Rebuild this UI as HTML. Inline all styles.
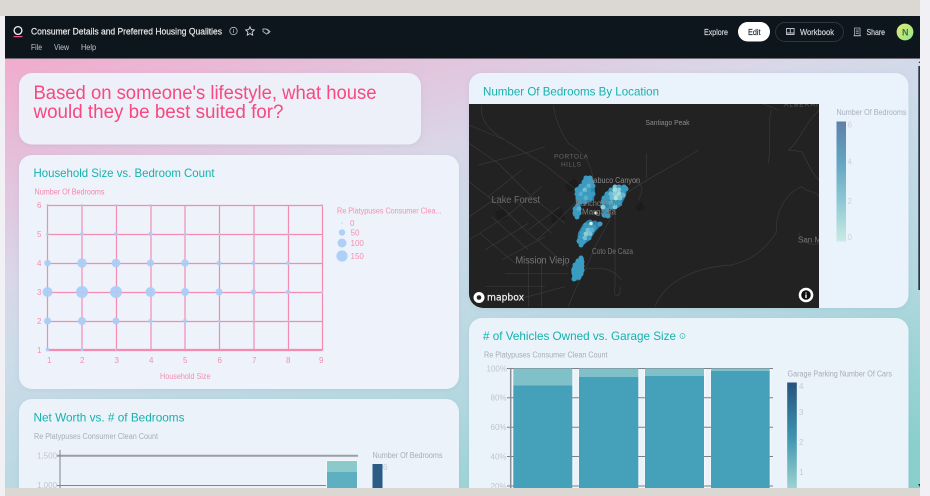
<!DOCTYPE html>
<html><head><meta charset="utf-8"><title>Consumer Details and Preferred Housing Qualities</title>
<style>
html,body{margin:0;padding:0;width:930px;height:496px;overflow:hidden;background:#f1f1f5}
svg{position:absolute;left:0;top:0;display:block}
text{font-family:"Liberation Sans",sans-serif}
.dots circle{r:2.5px}
.nav{stroke-width:.18px}
</style></head><body>
<svg width="930" height="496" viewBox="0 0 930 496" xmlns="http://www.w3.org/2000/svg">
<defs>
<linearGradient id="bg" gradientUnits="userSpaceOnUse" x1="63" y1="-0" x2="246" y2="638">
<stop offset="0" stop-color="#f7a3c7"/><stop offset=".19" stop-color="#e6bdd9"/><stop offset=".38" stop-color="#d9d7e8"/><stop offset=".49" stop-color="#cddce9"/><stop offset=".75" stop-color="#b3d8e0"/><stop offset="1" stop-color="#88d0cc"/></linearGradient>
<linearGradient id="l1" x1="0" y1="0" x2="0" y2="1"><stop offset="0" stop-color="#5e80a8"/><stop offset=".35" stop-color="#64a6c2"/><stop offset=".65" stop-color="#8cc6d4"/><stop offset="1" stop-color="#c8ebe3"/></linearGradient>
<linearGradient id="l2" x1="0" y1="0" x2="0" y2="1"><stop offset="0" stop-color="#27527d"/><stop offset=".5" stop-color="#3d93b1"/><stop offset="1" stop-color="#9fd6d0"/></linearGradient>
<linearGradient id="av" x1="0" y1="0" x2="1" y2="1"><stop offset="0" stop-color="#e4ea70"/><stop offset="1" stop-color="#8fe88f"/></linearGradient>
<clipPath id="mapc"><path d="M469 104H819V308H483A14 14 0 0 1 469 294Z"/></clipPath>
<filter id="soft" x="-5%" y="-5%" width="110%" height="110%"><feGaussianBlur stdDeviation=".35"/></filter>
<filter id="sh" x="-5%" y="-5%" width="110%" height="110%"><feDropShadow dx="0" dy="1" stdDeviation="3" flood-color="#8090b0" flood-opacity=".18"/></filter>
</defs>

<g filter="url(#soft)">
<rect x="0" y="0" width="930" height="496" fill="#f1f1f5"/>
<rect x="5" y="58" width="915" height="432" fill="url(#bg)"/>
<rect x="0" y="0" width="920" height="16" fill="#dbd8d3"/>
<rect x="5" y="16" width="915" height="42" fill="#11151a"/>
<rect x="5" y="58" width="915" height="1" fill="#6f6a75"/>

<!-- nav -->
<circle cx="18" cy="30.5" r="3.9" fill="none" stroke="#f4f4f4" stroke-width="1.3"/>
<rect x="13.5" y="36" width="9" height="1.2" fill="#ee4f8b"/>
<text class="nav" x="31" y="34.5" font-size="9.6" fill="#eceef0" stroke="#eceef0" textLength="191" lengthAdjust="spacingAndGlyphs">Consumer Details and Preferred Housing Qualities</text>
<text x="31" y="50" font-size="8" fill="#c2c7ce" textLength="11" lengthAdjust="spacingAndGlyphs">File</text>
<text x="54" y="50" font-size="8" fill="#c2c7ce" textLength="15" lengthAdjust="spacingAndGlyphs">View</text>
<text x="81" y="50" font-size="8" fill="#c2c7ce" textLength="15" lengthAdjust="spacingAndGlyphs">Help</text>
<circle cx="233.5" cy="31" r="3.7" fill="none" stroke="#b9bdc3" stroke-width=".8"/>
<path d="M233.5 30.3v2.4M233.5 29v.7" stroke="#b9bdc3" stroke-width=".8"/>
<path d="M250 26.8l1.3 2.8 3 .4-2.2 2.1.6 3-2.7-1.5-2.7 1.5.6-3-2.2-2.1 3-.4z" fill="none" stroke="#d5d8dc" stroke-width=".9"/>
<path d="M263 29h3.2l3 2.5-2.6 2.6-3.6-2.6zM267 29l3 2.5-2 2.2" fill="none" stroke="#aeb2b8" stroke-width=".9"/>

<text class="nav" x="704" y="35" font-size="8.2" fill="#d2d6dc" stroke="#d2d6dc" textLength="24" lengthAdjust="spacingAndGlyphs">Explore</text>
<rect x="738" y="22" width="32" height="19.5" rx="9.7" fill="#fff"/>
<text class="nav" x="748" y="35" font-size="8.2" fill="#1c2530" stroke="#1c2530" textLength="12.5" lengthAdjust="spacingAndGlyphs">Edit</text>
<rect x="775.5" y="22.5" width="68" height="19" rx="9.5" fill="none" stroke="#30353c" stroke-width=".9"/>
<path d="M786.5 28.5h3.2l.6.6.6-.6h3.200v6h-7.600zM786 33h8.600M790.300 29v4" fill="none" stroke="#bfc3c9" stroke-width=".9"/>
<text class="nav" x="800" y="35" font-size="8.4" fill="#d2d6dc" stroke="#d2d6dc" textLength="34" lengthAdjust="spacingAndGlyphs">Workbook</text>
<path d="M854.500 28h5.500v7.500h-5.500zM853.500 35.800h7.500M855.800 30h3M855.800 31.800h3M855.800 33.600h3" fill="none" stroke="#aeb2b8" stroke-width=".8"/>
<text class="nav" x="866.500" y="35" font-size="8.4" fill="#d2d6dc" stroke="#d2d6dc" textLength="18.500" lengthAdjust="spacingAndGlyphs">Share</text>
<circle cx="905" cy="32" r="8.4" fill="url(#av)"/>
<text x="902" y="35.3" font-size="9" font-weight="bold" fill="#4c6a3d">N</text>

<!-- cards -->
<rect x="19" y="73" width="402" height="71.500" rx="13" fill="#edf0f9" filter="url(#sh)"/>
<rect x="19" y="155" width="440" height="234" rx="13" fill="#eef2fa" filter="url(#sh)"/>
<rect x="19" y="399" width="440" height="110" rx="13" fill="#ebf2fa" filter="url(#sh)"/>
<rect x="469" y="73" width="439.500" height="235" rx="13" fill="#eaf2fb" filter="url(#sh)"/>
<rect x="469" y="318" width="439.500" height="190" rx="13" fill="#eaf2fa" filter="url(#sh)"/>

<text x="33.500" y="99" font-size="19" fill="#f7487f" textLength="343" lengthAdjust="spacingAndGlyphs">Based on someone's lifestyle, what house</text>
<text x="33.500" y="118" font-size="19" fill="#f7487f" textLength="250" lengthAdjust="spacingAndGlyphs">would they be best suited for?</text>

<!-- scatter -->
<text x="33.500" y="176.800" font-size="12" fill="#13b2ad" textLength="181" lengthAdjust="spacingAndGlyphs">Household Size vs. Bedroom Count</text>
<text x="34.500" y="194.500" font-size="8" fill="#f486ad" textLength="70" lengthAdjust="spacingAndGlyphs">Number Of Bedrooms</text>
<g stroke="#f68bb1" stroke-width="1.200" fill="none">
<path d="M47.500 205V350M82 205V350M116.500 205V350M151 205V350M185 205V350M219.500 205V350M254 205V350M288.500 205V350M322.500 205V350"/>
<path d="M47.500 205.500H322.500M47.500 234.500H322.500M47.500 263.500H322.500M47.500 292.500H322.500M47.500 321.500H322.500"/>
<path d="M47.500 350H322.500" stroke-width="2.200"/>
</g>
<g fill="#abcdf6" fill-opacity=".95">
<circle cx="47.500" cy="292" r="5"/><circle cx="82" cy="292" r="6"/><circle cx="116" cy="292" r="6"/><circle cx="150.500" cy="292" r="5"/><circle cx="185" cy="292" r="4"/><circle cx="219" cy="292" r="3.600"/><circle cx="253.500" cy="292" r="2.900"/><circle cx="288" cy="292" r="2.200"/><circle cx="322" cy="292" r="1.200"/>
<circle cx="47.500" cy="263" r="3.300"/><circle cx="82" cy="263" r="4.700"/><circle cx="116" cy="263" r="4.400"/><circle cx="150.500" cy="263" r="3.600"/><circle cx="185" cy="263" r="3.800"/><circle cx="219" cy="263" r="2.400"/><circle cx="253.500" cy="263" r="2"/><circle cx="288" cy="263" r="1.900"/>
<circle cx="47.500" cy="321" r="3.600"/><circle cx="82" cy="321" r="4"/><circle cx="116" cy="321" r="3.600"/><circle cx="150.500" cy="321" r="2.200"/><circle cx="185" cy="321" r="2.200"/><circle cx="219" cy="321" r="1.200"/><circle cx="253.500" cy="321" r="1"/><circle cx="288" cy="321" r=".9"/>
<circle cx="47.500" cy="234" r="1.500"/><circle cx="82" cy="234" r="1.900"/><circle cx="116" cy="234" r="1.900"/><circle cx="150.500" cy="234" r="2.200"/><circle cx="185" cy="234" r="1.500"/><circle cx="219" cy="234" r="1.100"/><circle cx="253.500" cy="234" r=".9"/><circle cx="288" cy="234" r="1"/>
<circle cx="47.500" cy="205" r="1.100"/><circle cx="82" cy="205" r="1"/><circle cx="116" cy="205" r="1"/><circle cx="150.500" cy="205" r="1"/><circle cx="322" cy="205" r="1"/>
<circle cx="47.500" cy="349.500" r="1.900"/><circle cx="82" cy="349.500" r="1.500"/><circle cx="116" cy="349.500" r="1.100"/>
<circle cx="342" cy="223" r=".7"/><circle cx="342" cy="232.500" r="3.200"/><circle cx="342" cy="243" r="4.500"/><circle cx="342" cy="256" r="5.600"/>
</g>
<g font-size="8" fill="#f48fb3">
<text x="37" y="208">6</text><text x="37" y="237">5</text><text x="37" y="266">4</text><text x="37" y="295">3</text><text x="37" y="324">2</text><text x="37" y="353">1</text>
<text x="47" y="363">1</text><text x="80" y="363">2</text><text x="114.500" y="363">3</text><text x="149" y="363">4</text><text x="183" y="363">5</text><text x="217.500" y="363">6</text><text x="252" y="363">7</text><text x="286" y="363">8</text><text x="319" y="363">9</text>
<text x="160" y="379" textLength="50.500" lengthAdjust="spacingAndGlyphs">Household Size</text>
<text x="337" y="213.500" textLength="104.500" lengthAdjust="spacingAndGlyphs">Re Platypuses Consumer Clea...</text>
<text x="350" y="226">0</text><text x="350.500" y="235.500">50</text><text x="350.500" y="246">100</text><text x="350.500" y="259">150</text>
</g>

<!-- net worth -->
<text x="33.500" y="421.500" font-size="12" fill="#13b2ad" textLength="151" lengthAdjust="spacingAndGlyphs">Net Worth vs. # of Bedrooms</text>
<text x="34" y="439" font-size="8" fill="#a7adb8" textLength="124" lengthAdjust="spacingAndGlyphs">Re Platypuses Consumer Clean Count</text>
<text x="37" y="458.500" font-size="8" fill="#c0c4cc">1,500</text>
<text x="37" y="488" font-size="8" fill="#c0c4cc">1,000</text>
<path d="M57 455.800H358" stroke="#9a9ea5" stroke-width="2"/>
<path d="M57 485.500H358" stroke="#7f848c" stroke-width="1"/>
<path d="M60 450V490" stroke="#7f848c" stroke-width="1"/>
<rect x="326" y="460" width="32" height="30" fill="#f4f8fc"/>
<rect x="327" y="461" width="30" height="11" fill="#8cc9ca"/>
<rect x="327" y="472" width="30" height="18" fill="#5fafc2"/>
<text x="372.500" y="458" font-size="8" fill="#a7adb8" textLength="70" lengthAdjust="spacingAndGlyphs">Number Of Bedrooms</text>
<rect x="372.500" y="464" width="10" height="26" fill="#2a5c86"/>
<text x="383" y="470" font-size="8" fill="#c5cad4">6</text>

<!-- map card -->
<text x="483" y="95.500" font-size="12" fill="#13b2ad" textLength="176" lengthAdjust="spacingAndGlyphs">Number Of Bedrooms By Location</text>
<g clip-path="url(#mapc)">
<rect x="469" y="104" width="350" height="204" fill="#222"/>
<g transform="translate(465 100) scale(.33333)">
<path d="M300 255l30-20 20 30-40 10zM90 335l30-10 10 30-30 10zM260 340l30-15 10 30-40 15zM510 320l20-15 10 20-20 10z" fill="#1b1b1b"/>
<g fill="none" stroke="#3a3a3a" stroke-width="2">
<path d="M12 75L120 120 240 195 335 270 330 310 260 380 215 420"/>
<path d="M12 130L100 190 200 290 300 370"/>
<path d="M50 15C45 50 60 85 120 120"/>
<path d="M265 15C270 60 290 100 310 130 340 150 375 170 385 240"/>
<path d="M12 245L120 330 180 390 240 440 310 500"/>
<path d="M40 195L180 160 240 140M70 290L170 210M130 345L230 260M190 390L285 320"/>
<path d="M12 350L100 290M12 420L130 345M60 450L190 370M110 480L240 410"/>
<path d="M80 350L190 450M45 400L150 490M150 300L260 400"/>
<path d="M190 480V620M230 470V620M120 520H310M60 560H240M150 600L300 560"/>
<path d="M310 620C330 560 370 500 390 440L450 330V560C440 590 470 600 465 560"/>
<path d="M345 510C400 500 440 500 470 540"/>
<path d="M570 620C600 540 700 500 800 495 860 480 900 450 935 395 930 340 960 280 1010 260 1030 280 1050 270 1062 290"/>
<path d="M470 290C520 250 640 190 700 150M545 160V235M510 240C530 260 540 260 520 300"/>
<path d="M1062 30C1020 70 1000 130 970 150L1010 155C1030 190 1040 220 1062 240M1000 400C1020 430 1040 440 1062 430"/>
<path d="M920 30C905 70 920 130 910 190M890 10L940 30"/>
</g>
</g>
<g fill="#2d84ab">
<path d="M584 176H592L595 190 594 200 585 204 576 202 575 188 582 184Z"/>
<path d="M576 204L581 206V214L578 218 573 216V208Z"/>
<path d="M616 185L627 186 626 196 620 207 612 210 604 206 601 200 606 192Z"/>
<path d="M600 205L609 208 610 217 604 218Z"/>
<path d="M588 220L603 223 595 232 590 240 582 246 577 243 578 233 583 224Z"/>
<path d="M580 257L584 258V272L580 280 573 281 571 270 575 262Z"/>
</g>
<g class="dots" fill="#3b9cc1">
<circle cx="586" cy="178"/><circle cx="590" cy="178"/><circle cx="584" cy="182"/><circle cx="588" cy="182"/><circle cx="592" cy="182"/><circle cx="581" cy="186"/><circle cx="585" cy="186"/><circle cx="589" cy="186" fill="#62b4cf"/><circle cx="593" cy="186"/><circle cx="577" cy="190"/><circle cx="581" cy="190"/><circle cx="585" cy="190" fill="#77c3d6"/><circle cx="589" cy="190"/><circle cx="577" cy="194"/><circle cx="581" cy="194" fill="#5db0cd"/><circle cx="585" cy="194"/><circle cx="589" cy="194"/><circle cx="593" cy="194"/><circle cx="578" cy="198"/><circle cx="582" cy="198"/><circle cx="586" cy="198" fill="#5db0cd"/><circle cx="590" cy="198"/><circle cx="580" cy="202"/><circle cx="585" cy="202"/>
<circle cx="578" cy="205"/><circle cx="575" cy="209"/><circle cx="579" cy="209" fill="#5db0cd"/><circle cx="575" cy="213"/><circle cx="579" cy="213"/><circle cx="577" cy="217"/>
<circle cx="615" cy="187" fill="#7cc6d6"/><circle cx="619" cy="187"/><circle cx="624" cy="187"/><circle cx="611" cy="190"/><circle cx="615" cy="190" fill="#a7dcdc"/><circle cx="619" cy="190" fill="#8ed0da"/><circle cx="623" cy="191"/><circle cx="626" cy="189"/><circle cx="607" cy="194"/><circle cx="611" cy="194" fill="#6fbdd3"/><circle cx="615" cy="194" fill="#8ed0da"/><circle cx="619" cy="194" fill="#a7dcdc"/><circle cx="623" cy="195" fill="#66b8d0"/><circle cx="604" cy="198"/><circle cx="608" cy="198"/><circle cx="612" cy="198" fill="#6fbdd3"/><circle cx="616" cy="198" fill="#b3e2de"/><circle cx="620" cy="198" fill="#7cc6d6"/><circle cx="603" cy="202"/><circle cx="607" cy="202"/><circle cx="611" cy="203" fill="#66b8d0"/><circle cx="615" cy="203"/><circle cx="619" cy="203"/><circle cx="611" cy="207"/><circle cx="615" cy="207" fill="#7cc6d6"/>
<circle cx="603" cy="207" fill="#8ed0da"/><circle cx="607" cy="210"/><circle cx="604" cy="215"/><circle cx="608" cy="216"/><circle cx="596" cy="213" fill="#d8f0e6" style="r:1.6px"/>
<circle cx="590" cy="222" fill="#2e7fad"/><circle cx="595" cy="223" fill="#2e7fad"/><circle cx="600" cy="224"/><circle cx="586" cy="225"/><circle cx="590" cy="226"/><circle cx="594" cy="227"/><circle cx="584" cy="229"/><circle cx="588" cy="230" fill="#78c2d5"/><circle cx="592" cy="230" fill="#5db0cd"/><circle cx="582" cy="233"/><circle cx="586" cy="234" fill="#8ed0da"/><circle cx="590" cy="234" fill="#78c2d5"/><circle cx="581" cy="237"/><circle cx="585" cy="238" fill="#78c2d5"/><circle cx="589" cy="238"/><circle cx="579" cy="241"/><circle cx="583" cy="242"/><circle cx="581" cy="245"/><circle cx="591" cy="223.500" fill="#d8f0e6" style="r:1.800px"/>
<circle cx="581" cy="258"/><circle cx="578" cy="261"/><circle cx="582" cy="262"/><circle cx="575" cy="265"/><circle cx="579" cy="265"/><circle cx="582" cy="266"/><circle cx="574" cy="269"/><circle cx="578" cy="269"/><circle cx="582" cy="270"/><circle cx="574" cy="273"/><circle cx="578" cy="273"/><circle cx="581" cy="274"/><circle cx="575" cy="277"/><circle cx="579" cy="277"/><circle cx="574" cy="279"/>
</g>
<text x="645.500" y="125" font-size="7.500" fill="#8d8d8d" textLength="44" lengthAdjust="spacingAndGlyphs">Santiago Peak</text>
<text x="784" y="106.500" font-size="6.500" letter-spacing="1" fill="#5f5f5f">ALBERHILL</text>
<text x="554" y="158.500" font-size="6.500" fill="#666" textLength="34">PORTOLA</text>
<text x="561" y="166.500" font-size="6.500" fill="#666" textLength="20">HILLS</text>
<text x="587" y="183" font-size="8" fill="#8a8a8a" textLength="53" lengthAdjust="spacingAndGlyphs">Trabuco Canyon</text>
<text x="491.500" y="203" font-size="10" fill="#6f6f6f" textLength="48.500" lengthAdjust="spacingAndGlyphs">Lake Forest</text>
<text x="575.500" y="206" font-size="8" fill="#7d7d7d" textLength="47" lengthAdjust="spacingAndGlyphs">Rancho Santa</text>
<text x="582" y="214.500" font-size="8" fill="#7d7d7d" textLength="34" lengthAdjust="spacingAndGlyphs">Margarita</text>
<text x="592" y="254" font-size="8" fill="#777" textLength="41" lengthAdjust="spacingAndGlyphs">Coto De Caza</text>
<text x="515.500" y="263.500" font-size="10" fill="#777" textLength="54" lengthAdjust="spacingAndGlyphs">Mission Viejo</text>
<text x="798" y="242.500" font-size="8" fill="#777">San Ma</text>
<circle cx="479" cy="297.500" r="5.500" fill="#fff"/><circle cx="479" cy="297.500" r="2.300" fill="#222"/>
<text x="487" y="300.500" font-size="9.500" style="font-family:'DejaVu Sans',sans-serif" fill="#f2f2f2" stroke="#f2f2f2" stroke-width=".2" textLength="37" lengthAdjust="spacingAndGlyphs">mapbox</text>
<circle cx="806" cy="295" r="7.300" fill="#fff"/><circle cx="806" cy="295" r="4.800" fill="#111"/>
<path d="M806 292.500v1M806 294.500v3.500" stroke="#fff" stroke-width="1.400"/>
</g>
<text x="836.500" y="115" font-size="8" fill="#aab0bf" textLength="70" lengthAdjust="spacingAndGlyphs">Number Of Bedrooms</text>
<rect x="836.500" y="121.500" width="9.500" height="120" fill="url(#l1)"/>
<g font-size="8" fill="#cdd2dc"><text x="847.500" y="127.500">6</text><text x="847.500" y="164.500">4</text><text x="847.500" y="204">2</text><text x="847.500" y="240">0</text></g>

<!-- bars card -->
<text x="483" y="340" font-size="12" fill="#13b2ad" textLength="193" lengthAdjust="spacingAndGlyphs"># of Vehicles Owned vs. Garage Size</text>
<circle cx="682.500" cy="336" r="2.500" fill="none" stroke="#3fbdb5" stroke-width=".7"/><path d="M682.500 335.500v2" stroke="#3fbdb5" stroke-width=".6"/>
<text x="484" y="357.500" font-size="8" fill="#a7adb8" textLength="123.500" lengthAdjust="spacingAndGlyphs">Re Platypuses Consumer Clean Count</text>
<g font-size="8" fill="#c0c5ce"><text x="486.500" y="371.500">100%</text><text x="490.500" y="400.500">80%</text><text x="490.500" y="430">60%</text><text x="490.500" y="459.500">40%</text><text x="490.500" y="489">20%</text></g>
<g fill="#f4f8fc"><rect x="512" y="368" width="61.500" height="122"/><rect x="578" y="368" width="61.500" height="122"/><rect x="644" y="368" width="61.500" height="122"/><rect x="710" y="368" width="61" height="122"/></g>
<path d="M507 368.500H773M507 397.800H773M507 427.200H773M507 456.500H773M507 486H773" stroke="#7b8089" stroke-width="1"/>
<path d="M510.700 368V490" stroke="#8a8f97" stroke-width="1.500"/>
<g fill="#80c1c9"><rect x="513.300" y="368.500" width="59" height="17"/><rect x="579" y="368.500" width="59.300" height="8.500"/><rect x="645" y="368.500" width="59" height="7.500"/><rect x="711" y="368.500" width="58.700" height="2.500"/></g>
<g fill="#45a0b9"><rect x="513.300" y="385.500" width="59" height="105"/><rect x="579" y="377" width="59.300" height="113"/><rect x="645" y="376" width="59" height="114"/><rect x="711" y="371" width="58.700" height="119"/></g>
<text x="787.500" y="376.500" font-size="8" fill="#a7adb8" textLength="104.500" lengthAdjust="spacingAndGlyphs">Garage Parking Number Of Cars</text>
<rect x="787.200" y="382.500" width="9.600" height="108" fill="url(#l2)"/>
<g font-size="8" fill="#c5cad4"><text x="799" y="389">4</text><text x="799" y="415">3</text><text x="799" y="445">2</text><text x="799" y="475">1</text></g>

<!-- scrollbar -->
<rect x="918.300" y="66" width="1.700" height="224" fill="#2c3648"/>
<path d="M918.500 63l1.500-2v2z" fill="#2c3648"/>
<path d="M918 484l2 0v3z" fill="#2c3648"/>

<!-- bottom bar -->
<rect x="5" y="488" width="915" height="8" fill="#dbd8d3"/>
<rect x="920" y="0" width="10" height="496" fill="#f1f1f5"/>
</g>
</svg>
</body></html>
